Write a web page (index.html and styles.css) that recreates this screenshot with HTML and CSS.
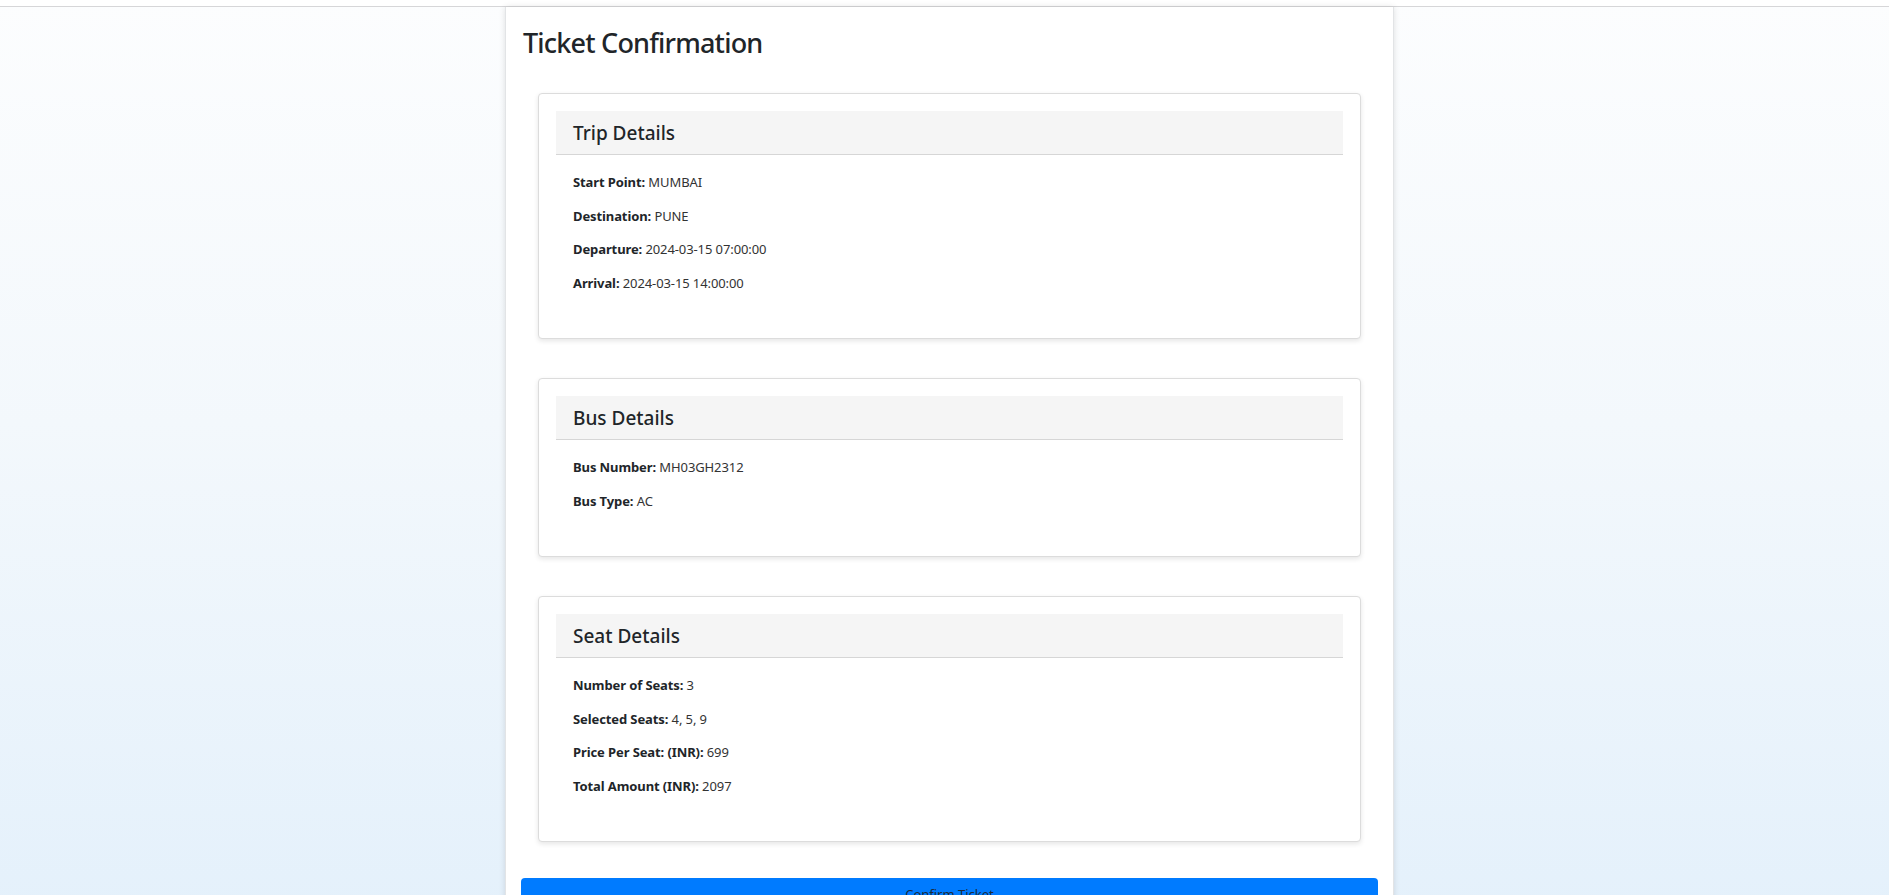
FILE: index.html
```html
<!DOCTYPE html>
<html lang="en">
<head>
<meta charset="utf-8">
<title>Ticket Confirmation</title>
<link rel="stylesheet" href="styles.css">
</head>
<body>
<div class="topbar"></div>
<div class="page">
  <main class="panel">
    <h3 class="title">Ticket Confirmation</h3>

    <section class="card">
      <div class="card-header">Trip Details</div>
      <div class="card-body">
        <p class="row"><b>Start Point:</b> MUMBAI</p>
        <p class="row"><b>Destination:</b> PUNE</p>
        <p class="row"><b>Departure:</b> 2024-03-15 07:00:00</p>
        <p class="row"><b>Arrival:</b> 2024-03-15 14:00:00</p>
      </div>
    </section>

    <section class="card">
      <div class="card-header">Bus Details</div>
      <div class="card-body">
        <p class="row"><b>Bus Number:</b> MH03GH2312</p>
        <p class="row"><b>Bus Type:</b> AC</p>
      </div>
    </section>

    <section class="card">
      <div class="card-header">Seat Details</div>
      <div class="card-body">
        <p class="row"><b>Number of Seats:</b> 3</p>
        <p class="row"><b>Selected Seats:</b> 4, 5, 9</p>
        <p class="row"><b>Price Per Seat: (INR):</b> 699</p>
        <p class="row"><b>Total Amount (INR):</b> 2097</p>
      </div>
    </section>

    <button class="btn-confirm" type="button">Confirm Ticket</button>
  </main>
</div>
</body>
</html>
```

FILE: styles.css
```css
html, body {
  margin: 0;
  padding: 0;
}

body {
  font-family: "Noto Sans", "Open Sans", sans-serif;
  color: #212529;
  background: linear-gradient(to bottom, #fcfdfe 0%, #f3f8fc 45%, #e3f0fb 100%);
  min-height: 100vh;
  overflow: hidden;
}

.topbar {
  height: 6px;
  background: #ffffff;
  border-bottom: 1px solid #d6d6d8;
}

.page {
  padding-left: 10px;
}

.panel {
  width: 889px;
  box-sizing: border-box;
  margin: 0 auto;
  background: #ffffff;
  border: 1px solid #e2e4e6;
  border-top: none;
  box-shadow: 0 0 6px rgba(0, 0, 0, 0.12);
  padding: 20px 15px 30px 15px;
}

.title {
  font-size: 27px;
  font-weight: 500;
  letter-spacing: -0.8px;
  line-height: 1.2;
  margin: 0 0 34px 2px;
  color: #212529;
}

.card {
  margin: 0 17px 39px 17px;
  border: 1px solid #dcdcdc;
  border-radius: 4px;
  box-shadow: 0 2px 5px rgba(0, 0, 0, 0.1);
  padding: 17px;
  background: #ffffff;
}

.card-header {
  background: #f5f5f5;
  border-bottom: 1px solid #d6d6d6;
  box-sizing: border-box;
  height: 44px;
  line-height: 43px;
  padding: 1px 17px 0 17px;
  font-size: 19px;
  font-weight: 500;
  color: #212529;
}

.card-body {
  padding: 17px 17px 15px 17px;
}

.row {
  margin: 0 0 13.5px 0;
  font-size: 13px;
  line-height: 20px;
  letter-spacing: -0.1px;
  color: #333333;
}

.row b {
  font-weight: 700;
  color: #212529;
}

.btn-confirm {
  display: block;
  width: 100%;
  margin-top: -3px;
  border: none;
  border-radius: 4px;
  background: #007bff;
  color: #1b2a3a;
  font-family: "Noto Sans", "Open Sans", sans-serif;
  font-size: 13px;
  line-height: 20px;
  padding: 6px 12px;
}
```
